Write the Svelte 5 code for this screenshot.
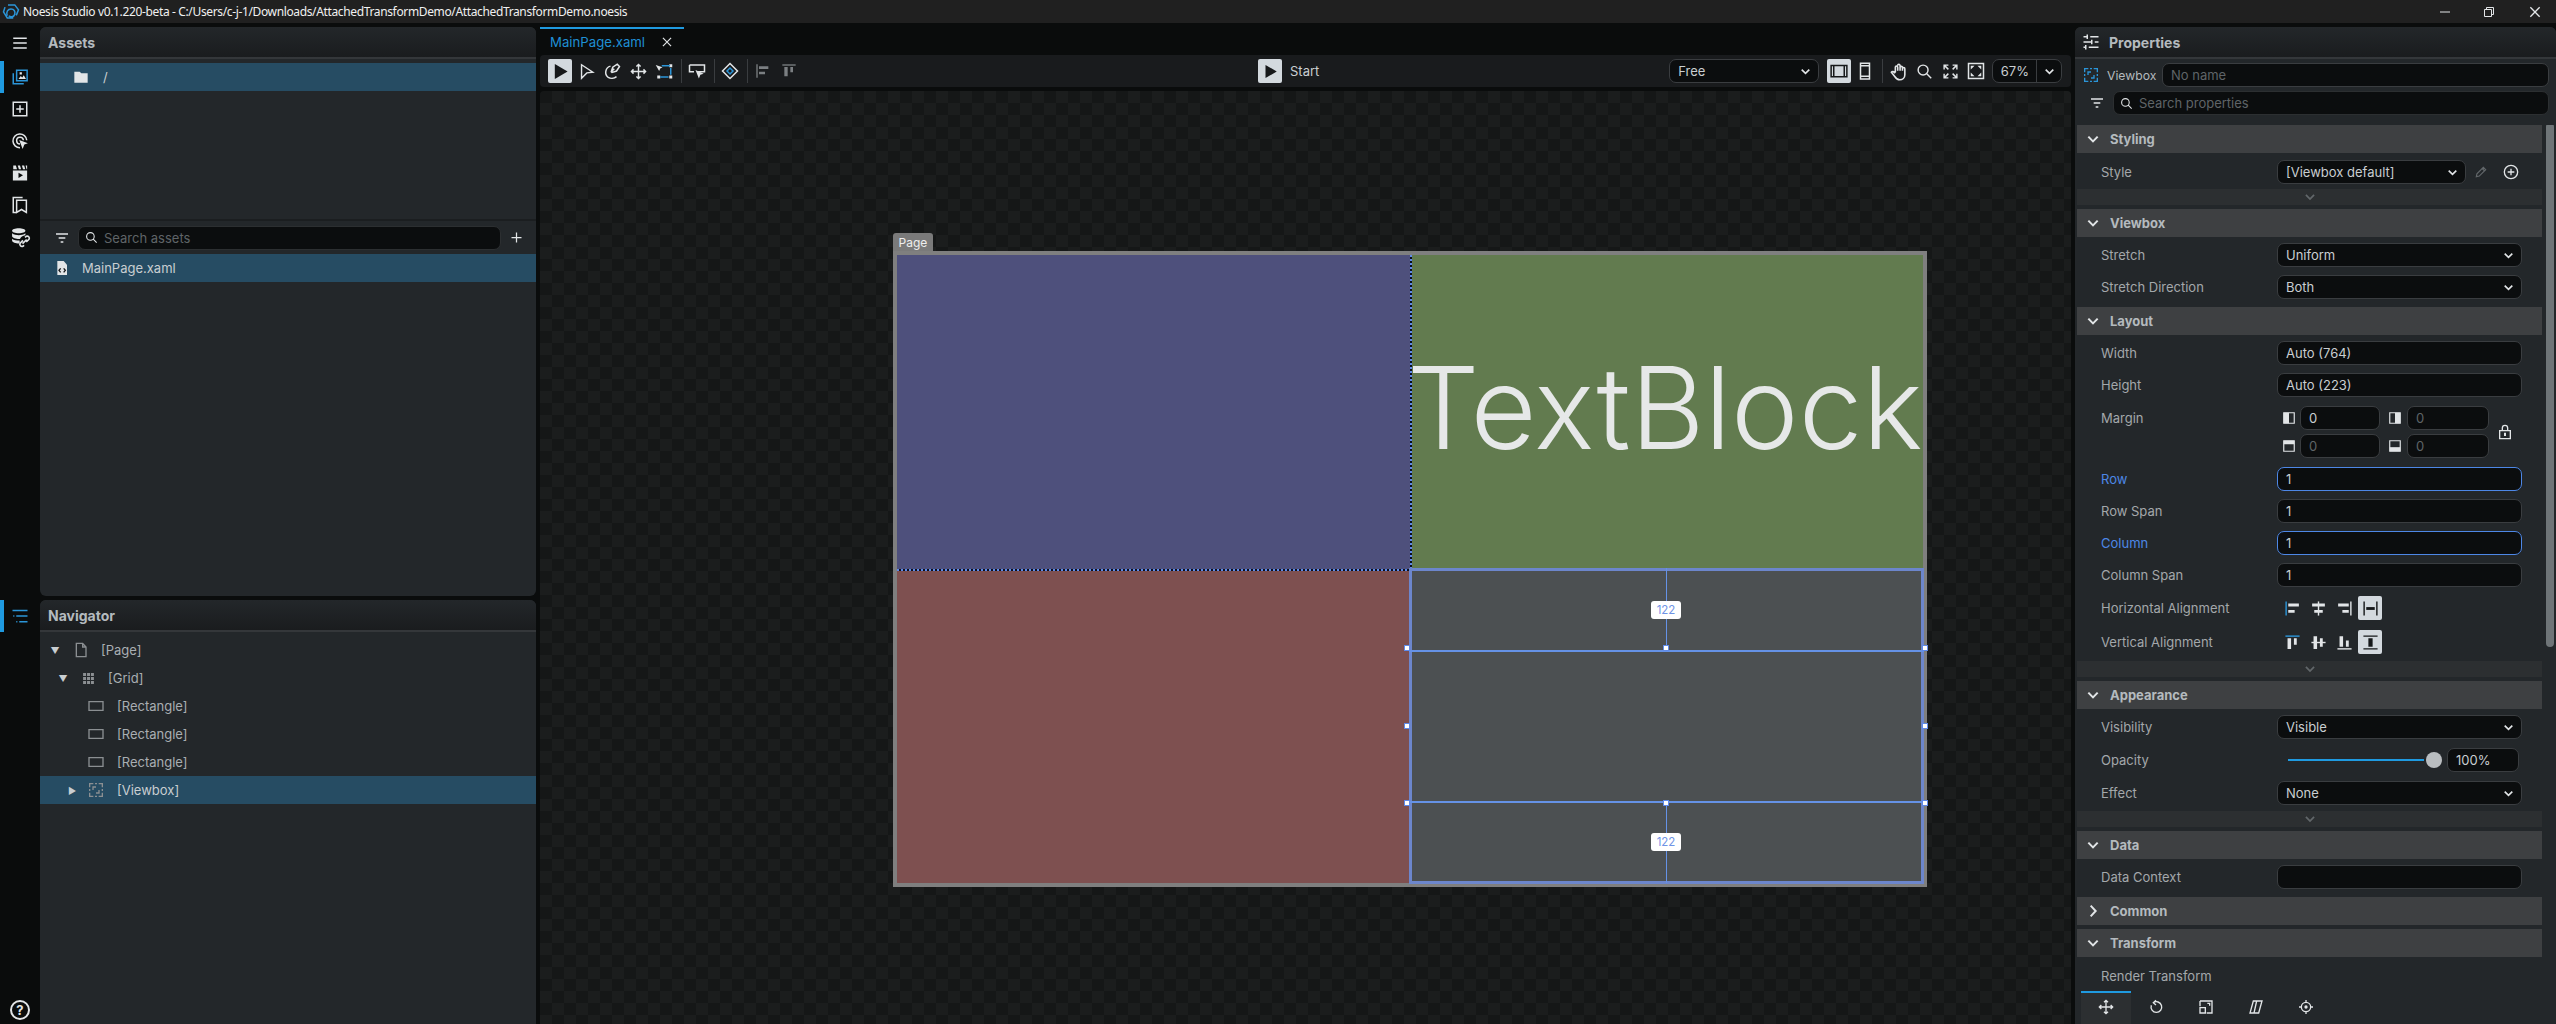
<script>
  const icons = {
    menu: { s: "M3 5.5h18M3 12h18M3 18.5h18" },
    assets: { b: "M3 7v14h14M7.5 3h14v14h-14z", f: "M10 14.5l3-4 2 2 2-3 3 5zM11.5 5.5h3v3h-3z" },
    add: { s: "M3 3h18v18H3zM12 7v10M7 12h10" },
    target: { s: "M12 21a9.2 9.2 0 1 1 9-10M12 16a4.5 4.5 0 1 1 4.5-5", f: "M11 10.5l11.5 4.5-4.7 1.8-2.3 5.7z" },
    film: { f: "M2.5 8.5h19V22h-19zM10 11.5v7l6-3.5zM3 2h3.5l1.5 5H3zM9 2h3l1.5 5h-3zM14.5 2h3l1.5 5h-3zM19.5 2h2v5h-.8z" },
    pages: { s: "M6.5 22H3V2h12.5M7.5 5.5h13V22L14 18l-6.5 4z" },
    db: { f: "M10.5 1.5c4.5 0 8 1.2 8 3s-3.5 3-8 3-8-1.2-8-3 3.5-3 8-3zM2.5 7.5c2 2 5.5 2.3 8 2.3s6-.3 8-2.3v2.3c-3 .3-6 2.3-6.5 4.5-4 .2-9.5-.8-9.5-3.5zM2.5 14c2 1.8 5.5 2.3 9 2.3l.2 3.5c-4 .2-9.2-1-9.2-3.5z", s: "M18 12.5l1.5-1.3a2.5 2.5 0 0 1 3.3 3.5L19.5 18M17 22l-1.5 1a2.5 2.5 0 0 1-3.3-3.5L15.5 16M15 20l5-5" },
    list: { b: "M2 4.5h20M7 12h15M11 19.5h11M3 12h1.5M7 19.5h1.5" },
    filter: { s: "M3 6h18M7 12h10M10 18h4" },
    search: { s: "M10 3a7 7 0 1 0 0 14 7 7 0 0 0 0-14zM15.2 15.2 21.5 21.5" },
    plus: { s: "M12 4v16M4 12h16" },
    file: { f: "M5 1.5h9.5l5 5.5v15.5H5z", d: "M10 12.5 7.5 15.5l2.5 3M14.5 12.5l2.5 3-2.5 3" },
    folder: { f: "M2 4h8l2.5 2.5H22V20.5H2z" },
    doc: { s: "M5 2h9.5l5 5.5V22H5zM14.5 2v5.5h5" },
    grid: { f: "M2 2h5.5v5.5H2zM9.3 2h5.5v5.5H9.3zM16.5 2H22v5.5h-5.5zM2 9.3h5.5v5.5H2zM9.3 9.3h5.5v5.5H9.3zM16.5 9.3H22v5.5h-5.5zM2 16.5h5.5V22H2zM9.3 16.5h5.5V22H9.3zM16.5 16.5H22V22h-5.5z" },
    rect: { s: "M1.5 5.5h21v13h-21z" },
    viewbox: { s: "M2.5 8V2.5H8M10.5 2.5h3M16 2.5h5.5V8M21.5 10.5v3M21.5 16v5.5H16M13.5 21.5h-3M8 21.5H2.5V16M2.5 13.5v-3M7.5 12V7.5H12M16.5 12v4.5H12" },
    arrowFill: { f: "M4 1.5 22 12 4 22.5z" },
    arrowLine: { s: "M5 2.5 21 13l-8.5 1L5 21.5z" },
    pen: { s: "M10 5.5a8.5 8.5 0 0 0-3 15c3 1.7 8 1.5 11-1M11 13l2-6 6-4 3 3-4 6-6 2zM11 13l4-4" },
    move: { s: "M12 2v20M2 12h20M9 5l3-3 3 3M9 19l3 3 3-3M5 9l-3 3 3 3M19 9l3 3-3 3" },
    nodes: { b: "M9 5h11M21 8v9M18 20H7", f: "M1 4l9 3-3 1.5-1.5 3.5zM19 3h4v4h-4zM19 18h4v4h-4zM3 18h4v4H3z" },
    dragbox: { s: "M2 4h20v9h-9M2 4v9h6", f: "M10 10.5 21 15.5l-4.5 1.5-2 5z" },
    shape: { s: "M12 2 22 12 12 22 2 12z", b: "M8 12l4-4 4 4-4 4z" },
    alignL: { s: "M3 2v20", f: "M6 5h14v4H6zM6 13h9v4H6z" },
    alignT: { s: "M2 3h20", f: "M5 6h5v14H5zM14 6h4v8h-4z" },
    aL: { b: "M3 2v20", f: "M6 5h15v4H6zM6 14h9v4H6z" },
    aC: { s: "M12 2v20", f: "M3 5h18v4H3zM6 14h12v4H6z" },
    aR: { s: "M21 2v20", f: "M3 5h15v4H3zM9 14h9v4H9z" },
    aS: { b: "M3 2v20M21 2v20", f: "M6 10h12v4H6z" },
    vT: { b: "M2 3h20", f: "M5 6h5v15H5zM14 6h4v9h-4z" },
    vC: { s: "M2 12h20", f: "M5 3h5v18H5zM14 6h4v12h-4z" },
    vB: { s: "M2 21h20", f: "M5 3h5v15H5zM14 9h4v9h-4z" },
    vS: { d: "M2 3h20M2 21h20", f2: "M9 6h6v12H9z" },
    chevDown: { s: "M5 8.5 12 15.5l7-7" },
    chevRight: { s: "M8.5 4l7.5 8-7.5 8" },
    close: { s: "M5 5l14 14M19 5 5 19" },
    screen: { b: "M1.5 4.5h21v15h-21z", d: "M5 4.5v15M19 4.5v15" },
    phone: { s: "M6 1.5h12v21H6zM6 5h12M6 19h12" },
    hand: { s: "M8 13V6.5a1.5 1.5 0 0 1 3 0V11m0-6.5a1.5 1.5 0 0 1 3 0V11m0-4a1.5 1.5 0 0 1 3 0V11m0-2.5a1.5 1.5 0 0 1 3 0V16c0 4-3 6.5-6.5 6.5S9 21 7 18l-4-5c1-1.5 3-1 5 1" },
    fit: { s: "M3 9V3h6M3 3l6 6M21 9V3h-6M21 3l-6 6M3 15v6h6M3 21l6-6M21 15v6h-6M21 21l-6-6" },
    fitBox: { s: "M2 2h20v20H2z", f: "M5 5h5L5 10zM19 5h-5l5 5zM5 19h5l-5-5zM19 19h-5l5-5z" },
    pencil: { s: "M4 20l1-5L16 4l4 4L9 19zM14 6l4 4" },
    plusCircle: { s: "M12 2a10 10 0 1 0 0 20 10 10 0 0 0 0-20zM12 7v10M7 12h10" },
    lock: { s: "M4 10h16v12H4zM8 10V6a4 4 0 0 1 8 0v4", f: "M10.5 13h3v5h-3z" },
    mL: { s: "M3 3h18v18H3z", f: "M3 3h9v18H3z" },
    mR: { s: "M3 3h18v18H3z", f: "M12 3h9v18h-9z" },
    mT: { s: "M3 3h18v18H3z", f: "M3 3h18v6H3z" },
    mB: { s: "M3 3h18v18H3z", f: "M3 14h18v7H3z" },
    props: { s: "M2 5h5M11 5h11M7 2v6M2 12h11M17 12h5M13 9v6M2 19h3M9 19h13M5 16v6" },
    rotate: { s: "M8 5.5a8 8 0 1 1-3 4M12 2 8 5.5l4 3.5" },
    scale: { s: "M3 3h18v18h-8M3 3v8M3 13h8v8H3zM14 6.5h3.5V10" },
    skew: { s: "M8 3h13l-5 18H3zM13 3 9 21" },
    pivot: { s: "M12 5a7 7 0 1 0 0 14 7 7 0 0 0 0-14zM12 1.5V5M12 19v3.5M1.5 12H5M19 12h3.5", f: "M12 9.5a2.5 2.5 0 1 0 0 5 2.5 2.5 0 0 0 0-5z" },
    logo: { b: "M8 2.5h9l5 6.5-3 7.5M4 5.5 2 12l5 8h8M7 17c-2-5 1-9 5-9s6 3 5 7-6 4-8 2" },
    minimize: { s: "M2 12h20" },
    restore: { s: "M3 7h14v14H3zM7 7V3h14v14h-4" }
  };

  const tabs = ["move", "rotate", "scale", "skew", "pivot"];
</script>

{#snippet ic(name, size = 16, cls = "")}
  {@const i = icons[name]}
  <svg class="ic {cls}" width={size} height={size} viewBox="0 0 24 24">
    {#if i.f}<path class="fill" fill-rule="evenodd" d={i.f} />{/if}
    {#if i.f2}<path class="fill-d" d={i.f2} />{/if}
    {#if i.s}<path class="stroke" d={i.s} />{/if}
    {#if i.b}<path class="blue" d={i.b} />{/if}
    {#if i.d}<path class="dark" d={i.d} />{/if}
  </svg>
{/snippet}

{#snippet select(value, cls = "")}
  <div class="input select {cls}"><span>{value}</span>{@render ic("chevDown", 13)}</div>
{/snippet}

{#snippet field(label, value, cls = "")}
  <div class="prop {cls}">
    <span class="label">{label}</span>
    <div class="input">{value}</div>
  </div>
{/snippet}

{#snippet combo(label, value, cls = "")}
  <div class="prop {cls}">
    <span class="label">{label}</span>
    {@render select(value)}
  </div>
{/snippet}

{#snippet head(title, open = true)}
  <div class="sec-head">
    {@render ic(open ? "chevDown" : "chevRight", 16)}
    <span>{title}</span>
  </div>
{/snippet}

{#snippet more()}
  <div class="more">{@render ic("chevDown", 14, "dim")}</div>
{/snippet}

{#snippet treeRow(label, icon, depth, arrow = "", sel = false)}
  <div class="tree-row d{depth}" class:sel>
    <span class="twist">{arrow}</span>
    {@render ic(icon, depth === 1 ? 13 : 16, "muted")}
    <span class="tree-label">{label}</span>
  </div>
{/snippet}

<div class="app">
  <header class="titlebar">
    {@render ic("logo", 18)}
    <span class="title">Noesis Studio v0.1.220-beta - C:/Users/c-j-1/Downloads/AttachedTransformDemo/AttachedTransformDemo.noesis</span>
    <div class="win">
      {@render ic("minimize", 12)}
      {@render ic("restore", 12)}
      {@render ic("close", 16)}
    </div>
  </header>

  <div class="main">
    <nav class="rail">
      <div class="rail-btn">{@render ic("menu", 18)}</div>
      <div class="rail-gap"></div>
      <div class="rail-btn active">{@render ic("assets", 18)}</div>
      <div class="rail-btn">{@render ic("add", 18)}</div>
      <div class="rail-btn">{@render ic("target", 18)}</div>
      <div class="rail-btn">{@render ic("film", 18)}</div>
      <div class="rail-btn">{@render ic("pages", 18)}</div>
      <div class="rail-btn">{@render ic("db", 20)}</div>
      <div class="rail-spacer"></div>
      <div class="rail-btn active">{@render ic("list", 18)}</div>
      <div class="rail-fill"></div>
      <div class="help">?</div>
    </nav>

    <aside class="left">
      <section class="panel assets">
        <div class="panel-head"><span>Assets</span></div>
        <div class="folders">
          <div class="row sel folder-row">{@render ic("folder", 16)}<span>/</span></div>
        </div>
        <div class="search-row">
          {@render ic("filter", 16, "filter")}
          <div class="input search">{@render ic("search", 13)}<span class="ph">Search assets</span></div>
          {@render ic("plus", 15)}
        </div>
        <div class="row sel file-row">{@render ic("file", 16)}<span>MainPage.xaml</span></div>
      </section>

      <section class="panel navigator">
        <div class="panel-head"><span>Navigator</span></div>
        <div class="tree">
          {@render treeRow("[Page]", "doc", 0, "▼")}
          {@render treeRow("[Grid]", "grid", 1, "▼")}
          {@render treeRow("[Rectangle]", "rect", 2)}
          {@render treeRow("[Rectangle]", "rect", 2)}
          {@render treeRow("[Rectangle]", "rect", 2)}
          {@render treeRow("[Viewbox]", "viewbox", 2, "▶", true)}
        </div>
      </section>
    </aside>

    <main class="center">
      <div class="tabstrip">
        <div class="tab"><span>MainPage.xaml</span>{@render ic("close", 14)}</div>
      </div>

      <div class="toolbar">
        <div class="tool on">{@render ic("arrowFill", 17)}</div>
        <div class="tool">{@render ic("arrowLine", 17)}</div>
        <div class="tool">{@render ic("pen", 18)}</div>
        <div class="tool">{@render ic("move", 17)}</div>
        <div class="tool">{@render ic("nodes", 18)}</div>
        <i class="sep"></i>
        <div class="tool">{@render ic("dragbox", 18)}</div>
        <i class="sep"></i>
        <div class="tool">{@render ic("shape", 18)}</div>
        <i class="sep"></i>
        <div class="tool off">{@render ic("alignL", 16)}</div>
        <div class="tool off">{@render ic("alignT", 16)}</div>

        <div class="start">
          <div class="tool on">{@render ic("arrowFill", 15)}</div>
          <span>Start</span>
        </div>

        {@render select("Free", "free")}
        <div class="tool on">{@render ic("screen", 18)}</div>
        <div class="tool">{@render ic("phone", 18)}</div>
        <i class="sep"></i>
        <div class="tool">{@render ic("hand", 19)}</div>
        <div class="tool">{@render ic("search", 17)}</div>
        <div class="tool">{@render ic("fit", 17)}</div>
        <div class="tool">{@render ic("fitBox", 18)}</div>
        <div class="zoom">
          <span>67%</span>
          <div class="zoom-arrow">{@render ic("chevDown", 13)}</div>
        </div>
      </div>

      <div class="canvas">
        <div class="page">
          <div class="page-tab">Page</div>
          <div class="cell blue"></div>
          <div class="vdiv"></div>
          <div class="cell green"><span class="textblock">TextBlock</span></div>
          <div class="hdiv"></div>
          <div class="hdiv"></div>
          <div class="hdiv"></div>
          <div class="cell red"></div>
          <div class="vdiv"></div>
          <div class="cell gray">
            <div class="selection">
              <i class="guide top"></i>
              <i class="guide bottom"></i>
              <i class="stem upper"></i>
              <i class="stem lower"></i>
              <span class="size upper">122</span>
              <span class="size lower">122</span>
              <i class="h t l"></i><i class="h t c"></i><i class="h t r"></i>
              <i class="h m l"></i><i class="h m r"></i>
              <i class="h b l"></i><i class="h b c"></i><i class="h b r"></i>
            </div>
          </div>
        </div>
      </div>
    </main>

    <aside class="panel right">
      <div class="panel-head props-head">{@render ic("props", 18)}<span>Properties</span></div>
      <div class="name-row">
        {@render ic("viewbox", 16, "accent")}
        <span class="name-label">Viewbox</span>
        <div class="input grow"><span class="ph">No name</span></div>
      </div>
      <div class="prop-search">
        {@render ic("filter", 16, "filter")}
        <div class="input search grow">{@render ic("search", 13)}<span class="ph">Search properties</span></div>
      </div>

      <div class="sheet">
        <div class="scrollthumb"></div>

        {@render head("Styling")}
        <div class="prop style-row">
          <span class="label">Style</span>
          <div class="style-val">
            {@render select("[Viewbox default]", "narrow")}
            {@render ic("pencil", 14, "dim")}
            {@render ic("plusCircle", 16)}
          </div>
        </div>
        {@render more()}

        {@render head("Viewbox")}
        <div class="rows">
          {@render combo("Stretch", "Uniform")}
          {@render combo("Stretch Direction", "Both")}
        </div>

        {@render head("Layout")}
        <div class="rows layout">
          {@render field("Width", "Auto (764)")}
          {@render field("Height", "Auto (223)")}
          <div class="prop margin">
            <span class="label">Margin</span>
            <div class="margin-grid">
              {@render ic("mL", 14, "mg")}<div class="input">0</div>
              {@render ic("mR", 14, "mg second")}<div class="input ph">0</div>
              {@render ic("mT", 14, "mg")}<div class="input ph">0</div>
              {@render ic("mB", 14, "mg second")}<div class="input ph">0</div>
              <div class="lock">{@render ic("lock", 16)}</div>
            </div>
          </div>
          {@render field("Row", "1", "bound")}
          {@render field("Row Span", "1")}
          {@render field("Column", "1", "bound")}
          {@render field("Column Span", "1")}
          <div class="prop align">
            <span class="label">Horizontal Alignment</span>
            <div class="btns">
              <div class="tool">{@render ic("aL", 17)}</div>
              <div class="tool">{@render ic("aC", 17)}</div>
              <div class="tool">{@render ic("aR", 17)}</div>
              <div class="tool on">{@render ic("aS", 17)}</div>
            </div>
          </div>
          <div class="prop align low">
            <span class="label">Vertical Alignment</span>
            <div class="btns">
              <div class="tool">{@render ic("vT", 17)}</div>
              <div class="tool">{@render ic("vC", 17)}</div>
              <div class="tool">{@render ic("vB", 17)}</div>
              <div class="tool on">{@render ic("vS", 17)}</div>
            </div>
          </div>
        </div>
        {@render more()}

        {@render head("Appearance")}
        <div class="rows appearance">
          {@render combo("Visibility", "Visible")}
          <div class="prop">
            <span class="label">Opacity</span>
            <div class="slider">
              <div class="track"></div>
              <div class="thumb"></div>
              <div class="input pct">100%</div>
            </div>
          </div>
          {@render combo("Effect", "None")}
        </div>
        {@render more()}

        {@render head("Data")}
        <div class="rows">
          {@render field("Data Context", "")}
        </div>
        {@render head("Common", false)}
        <div class="spacer"></div>
        {@render head("Transform")}
        <div class="render-label">Render Transform</div>
      </div>

      <div class="tabs">
        {#each tabs as t, i}
          <div class="t-tab" class:cur={i === 0}>{@render ic(t, 16)}</div>
        {/each}
      </div>
    </aside>
  </div>
</div>

<style>
  :global(body) {
    margin: 0;
    background: #0a0c0c;
  }

  .app {
    width: 2556px;
    height: 1024px;
    overflow: hidden;
    display: flex;
    flex-direction: column;
    font-family: Inter, "Noto Sans", sans-serif;
    font-size: 13px;
    color: #c9ced1;
    background: #0a0c0c;
  }

  .ic {
    display: block;
    flex: none;
    color: #e2e5e7;
    overflow: visible;
  }
  .ic .fill { fill: currentColor; }
  .ic .fill-d { fill: #16181a; }
  .ic .stroke { fill: none; stroke: currentColor; stroke-width: 2; }
  .ic .blue { fill: none; stroke: #2b95d8; stroke-width: 2; }
  .ic .dark { fill: none; stroke: #16181a; stroke-width: 2; }
  .ic.muted { color: #8b8f92; }
  .ic.dim { color: #62676a; }
  .ic.accent .stroke { stroke: #2b95d8; }

  .titlebar {
    height: 23px;
    flex: none;
    display: flex;
    align-items: center;
    padding-left: 2px;
    gap: 3px;
    background: #202020;
    font-family: "Noto Sans", sans-serif;
    font-size: 12px;
    color: #f0f0f0;
  }
  .title { letter-spacing: -0.36px; }
  .win {
    margin-left: auto;
    display: flex;
    align-items: center;
    gap: 32px;
    padding-right: 13px;
  }

  .main {
    flex: 1;
    display: flex;
    min-height: 0;
    padding-top: 4px;
  }

  .rail {
    width: 40px;
    flex: none;
    display: flex;
    flex-direction: column;
  }
  .rail-btn {
    height: 32px;
    flex: none;
    display: flex;
    align-items: center;
    justify-content: center;
    position: relative;
  }
  .rail-btn.active::before {
    content: "";
    position: absolute;
    left: 0;
    top: 0;
    bottom: 0;
    width: 4px;
    background: #1f9ae0;
  }
  .rail-gap { height: 2px; flex: none; }
  .rail-spacer { height: 347px; flex: none; }
  .rail-fill { flex: 1; }
  .help {
    width: 16px;
    height: 16px;
    margin: 0 0 4px 10px;
    border: 2px solid #e2e5e7;
    border-radius: 50%;
    display: flex;
    align-items: center;
    justify-content: center;
    font-size: 13px;
    font-weight: 700;
    color: #e2e5e7;
  }

  .left {
    width: 496px;
    flex: none;
    display: flex;
    flex-direction: column;
    gap: 4px;
  }
  .panel {
    background: #23272a;
    border-radius: 6px 6px 0 0;
    display: flex;
    flex-direction: column;
    min-height: 0;
  }
  .assets {
    height: 569px;
    flex: none;
    border-radius: 6px;
  }
  .navigator { flex: 1; }
  .panel-head {
    height: 30px;
    flex: none;
    display: flex;
    align-items: center;
    padding-left: 8px;
    background: linear-gradient(#23272a, #1a1c1e);
    border-bottom: 2px solid #34373a;
    font-weight: 700;
    font-size: 14px;
    color: #b4babe;
    border-radius: 6px 6px 0 0;
  }
  .row {
    display: flex;
    align-items: center;
    height: 28px;
  }
  .sel { background: #264c63; }
  .folders {
    height: 162px;
    flex: none;
    box-sizing: border-box;
    padding-top: 4px;
    border-bottom: 2px solid #1b1e20;
  }
  .folder-row { padding-left: 33px; gap: 14px; }
  .file-row { padding-left: 14px; gap: 12px; }
  .search-row {
    height: 33px;
    flex: none;
    display: flex;
    align-items: center;
    padding: 0 12px 0 14px;
    gap: 8px;
  }
  .search-row .search { flex: 1; }
  .tree { padding-top: 4px; }
  .tree-row {
    height: 28px;
    display: flex;
    align-items: center;
    color: #a9aeb2;
  }
  .twist {
    flex: none;
    width: 20px;
    font-size: 9px;
    color: #c9ced1;
    text-align: center;
  }
  .d0 .twist { margin: 0 8px 0 5px; }
  .d1 .twist { margin: 0 9px 0 13px; }
  .d2 .twist { margin: 0 6px 0 22px; }
  .tree-label { margin-left: 13px; }
  .d0 .tree-label { margin-left: 12px; }
  .tree-row.sel .tree-label { color: #c9ced1; }

  .input {
    height: 24px;
    box-sizing: border-box;
    background: #0b0d0e;
    border: 1px solid #3a3d40;
    border-radius: 7px;
    display: flex;
    align-items: center;
    padding: 0 8px;
    color: #c9ced1;
    min-width: 0;
  }
  .input.select { justify-content: space-between; padding-right: 6px; }
  .input.select .ic .stroke { stroke-width: 3; }
  .ph, .input.ph { color: #5f6467; }
  .search { gap: 6px; padding-left: 6px; border-color: #2c2f31; }
  .grow { flex: 1; }

  .center {
    width: 1531px;
    margin-left: 4px;
    flex: none;
    display: flex;
    flex-direction: column;
  }
  .tabstrip { height: 28px; flex: none; }
  .tab {
    width: 144px;
    height: 28px;
    box-sizing: border-box;
    border-top: 2px solid #1f9ae0;
    display: flex;
    align-items: center;
    justify-content: space-between;
    padding: 0 10px 0 10px;
    color: #1f8fd4;
    font-size: 13.2px;
  }
  .toolbar {
    height: 32px;
    flex: none;
    box-sizing: border-box;
    display: flex;
    align-items: center;
    padding: 0 8px;
    gap: 2px;
    background: #191b1d;
    border-radius: 4px;
  }
  .tool {
    width: 24px;
    height: 24px;
    flex: none;
    display: flex;
    align-items: center;
    justify-content: center;
    border-radius: 2px;
  }
  .tool.on { background: #d3d9de; }
  .tool.on .ic { color: #16181a; }
  .tool.on .ic .blue { stroke: #16181a; }
  .tool.off .ic { color: #7b7f82; }
  .sep {
    width: 1px;
    height: 24px;
    flex: none;
    margin: 0 1px 0 3px;
    background: #3a3d40;
  }
  .start {
    margin-left: 455px;
    display: flex;
    align-items: center;
    gap: 8px;
  }
  .start span { margin-right: 348px; }
  .free { width: 150px; flex: none; margin-right: 6px; }
  .zoom {
    width: 70px;
    height: 24px;
    flex: none;
    margin-left: 2px;
    box-sizing: border-box;
    border: 1px solid #3a3d40;
    border-radius: 7px;
    background: #0b0d0e;
    display: flex;
    align-items: center;
  }
  .zoom span { width: 43px; text-align: center; }
  .zoom-arrow {
    flex: 1;
    height: 100%;
    border-left: 1px solid #3a3d40;
    display: flex;
    align-items: center;
    justify-content: center;
  }
  .zoom-arrow .ic .stroke { stroke-width: 3; }

  .canvas {
    flex: 1;
    margin-top: 4px;
    position: relative;
    border-radius: 4px 4px 0 0;
    background: repeating-conic-gradient(#1b1d1d 0 25%, #151717 0 50%) 0 0 / 24px 24px;
  }
  .page {
    position: absolute;
    left: 353px;
    top: 160px;
    width: 1034px;
    height: 636px;
    box-sizing: border-box;
    border: 4px solid #7f7f7f;
    display: grid;
    grid-template-columns: 513px 2px 511px;
    grid-template-rows: 314px 2px 312px;
  }
  .page-tab {
    position: absolute;
    left: -4px;
    top: -22px;
    width: 40px;
    height: 18px;
    background: #7a7a7a;
    border-radius: 3px 3px 0 0;
    font-size: 12px;
    color: #eee;
    display: flex;
    align-items: center;
    justify-content: center;
  }
  .cell { position: relative; min-width: 0; }
  .blue { background: #4e507c; }
  .green {
    background: #627b4f;
    display: flex;
    align-items: center;
  }
  .red { background: #7e5050; }
  .gray { background: #4c5052; }
  .vdiv { background: repeating-linear-gradient(#5f8ae8 0 2px, #0c0e1a 2px 4px); }
  .hdiv { background: repeating-linear-gradient(90deg, #5f8ae8 0 2px, #0c0e1a 2px 4px); }
  .textblock {
    font-size: 114px;
    font-weight: 300;
    color: #e6e8e8;
    line-height: 1;
    margin-bottom: 8px;
    margin-left: -5px;
    white-space: nowrap;
  }

  .selection {
    position: absolute;
    inset: -3px -1px -1px -3px;
    border: 3px solid #6c86cc;
  }
  .guide {
    position: absolute;
    left: -3px;
    right: -3px;
    height: 2px;
    background: #6592e6;
  }
  .guide.top { top: 79px; }
  .guide.bottom { top: 230px; }
  .stem {
    position: absolute;
    left: 254px;
    width: 1px;
    background: #6592e6;
  }
  .stem.upper { top: -3px; height: 81px; }
  .stem.lower { top: 232px; height: 80px; }
  .size {
    position: absolute;
    left: 239px;
    width: 30px;
    height: 18px;
    background: #fff;
    border-radius: 3px;
    font-size: 11.5px;
    color: #6f94e6;
    display: flex;
    align-items: center;
    justify-content: center;
  }
  .size.upper { top: 30px; }
  .size.lower { top: 262px; }
  .h {
    position: absolute;
    width: 4px;
    height: 4px;
    background: #fff;
    border: 1px solid #5f8ae8;
  }
  .h.t { top: 74px; }
  .h.m { top: 152px; }
  .h.b { top: 229px; }
  .h.l { left: -8px; }
  .h.c { left: 251px; }
  .h.r { left: 510px; }

  .right {
    width: 481px;
    margin-left: 4px;
    flex: none;
    position: relative;
  }
  .props-head { gap: 9px; padding-left: 7px; }
  .name-row {
    height: 24px;
    flex: none;
    margin-top: 4px;
    display: flex;
    align-items: center;
    gap: 8px;
    padding: 0 7px 0 8px;
    color: #b4babe;
  }
  .name-label { width: 47px; font-size: 12.2px; }
  .prop-search {
    height: 24px;
    flex: none;
    margin-top: 4px;
    display: flex;
    align-items: center;
    gap: 8px;
    padding: 0 7px 0 14px;
  }
  .sheet {
    flex: 1;
    margin-top: 10px;
    position: relative;
    padding: 0 14px 0 2px;
    min-height: 0;
    overflow: hidden;
  }
  .scrollthumb {
    position: absolute;
    right: 2px;
    top: -2px;
    width: 8px;
    height: 524px;
    border-radius: 4px;
    background: #6f7578;
  }
  .sec-head {
    height: 28px;
    display: flex;
    align-items: center;
    gap: 9px;
    padding-left: 8px;
    background: #3e4042;
    color: #b4babe;
    font-weight: 700;
    font-size: 13px;
  }
  .sec-head .ic .stroke { stroke-width: 3; }
  .more {
    height: 16px;
    margin-bottom: 4px;
    background: #2c2f31;
    display: flex;
    align-items: center;
    justify-content: center;
  }
  .more .ic .stroke { stroke-width: 3; }
  .rows {
    display: flex;
    flex-direction: column;
    gap: 8px;
    padding: 6px 0 8px;
  }
  .prop {
    display: grid;
    grid-template-columns: 200px 245px;
    align-items: center;
    height: 24px;
  }
  .label {
    padding-left: 24px;
    color: #a3a8ab;
  }
  .style-row { margin: 7px 0 5px; }
  .style-val { display: flex; align-items: center; gap: 8px; }
  .style-val .select { width: 189px; flex: none; }
  .style-val .ic:last-child { margin-left: 7px; }
  .layout { padding-bottom: 7px; }
  .margin {
    height: 51px;
    align-items: start;
    margin-top: 1px;
    margin-bottom: 2px;
  }
  .margin .label { line-height: 24px; }
  .margin-grid {
    display: grid;
    grid-template-columns: 23px 80px 27px 82px;
    grid-template-rows: 24px 24px;
    row-gap: 4px;
    position: relative;
    width: 245px;
  }
  .margin-grid .mg { align-self: center; margin-left: 5px; }
  .margin-grid .mg.second { margin-left: 8px; }
  .lock {
    position: absolute;
    left: 220px;
    top: 18px;
  }
  .bound .label { color: #4d87e6; }
  .bound .input { border-color: #4d87e6; }
  .align { margin-top: 1px; }
  .align.low { margin-top: 2px; }
  .btns { display: flex; gap: 2px; padding-left: 3px; }
  .appearance { gap: 9px; padding-bottom: 6px; }
  .slider { display: flex; align-items: center; position: relative; padding-left: 11px; }
  .track { width: 136px; height: 2px; background: #1f9ae0; flex: none; }
  .thumb {
    width: 16px;
    height: 16px;
    flex: none;
    border-radius: 50%;
    margin-left: 2px;
    background: #b9bdc0;
  }
  .pct { width: 72px; flex: none; margin-left: 5px; }
  .spacer { height: 4px; }
  .render-label {
    padding: 11px 0 0 24px;
    color: #a3a8ab;
  }
  .tabs {
    position: absolute;
    left: 6px;
    right: 0;
    bottom: 0;
    height: 33px;
    display: flex;
    background: #23272a;
  }
  .t-tab {
    width: 50px;
    display: flex;
    align-items: center;
    justify-content: center;
    box-sizing: border-box;
    border-top: 2px solid transparent;
    padding-bottom: 4px;
  }
  .t-tab.cur {
    border-top-color: #1f9ae0;
    background: #2c2f31;
  }
</style>
